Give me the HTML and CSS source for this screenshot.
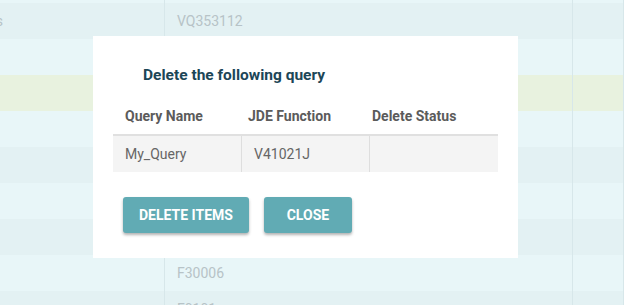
FILE: index.html
```html
<!DOCTYPE html>
<html lang="en">
<head>
    <meta charset="UTF-8">
    <meta name="viewport" content="width=device-width, initial-scale=1.0">
    <title>Delete Query</title>
    <link rel="stylesheet" href="styles.css">
</head>
<body>

<div class="grid">
    <div class="row light"><div class="cell first"></div><div class="cell"></div><div class="cell"></div></div>
    <div class="row dark"><div class="cell first"><span>Orders</span></div><div class="cell">VQ353112</div><div class="cell"></div></div>
    <div class="row light"><div class="cell first"></div><div class="cell"></div><div class="cell"></div></div>
    <div class="row selected"><div class="cell first"></div><div class="cell"></div><div class="cell"></div></div>
    <div class="row light"><div class="cell first"></div><div class="cell"></div><div class="cell"></div></div>
    <div class="row dark"><div class="cell first"></div><div class="cell"></div><div class="cell"></div></div>
    <div class="row light"><div class="cell first"></div><div class="cell"></div><div class="cell"></div></div>
    <div class="row dark"><div class="cell first"></div><div class="cell"></div><div class="cell"></div></div>
    <div class="row light"><div class="cell first"></div><div class="cell">F30006</div><div class="cell"></div></div>
    <div class="row dark"><div class="cell first"></div><div class="cell">F0101</div><div class="cell"></div></div>
</div>

<div class="modal">
    <h3 class="modal-title">Delete the following query</h3>
    <div class="query-table">
        <div class="query-head">
            <div>Query Name</div>
            <div>JDE Function</div>
            <div>Delete Status</div>
        </div>
        <div class="query-row">
            <div>My_Query</div>
            <div>V41021J</div>
            <div></div>
        </div>
    </div>
    <div class="actions">
        <button class="btn">Delete Items</button>
        <button class="btn">Close</button>
    </div>
</div>

</body>
</html>
```

FILE: styles.css
```css
body {
    font-family: Roboto, "Liberation Sans", Arial, sans-serif;
    margin: 0;
    width: 624px;
    height: 305px;
    overflow: hidden;
    position: relative;
    background-color: #e8f5f7;
}

/* background data grid */
.grid {
    margin-top: -33px;
}

.row {
    display: grid;
    grid-template-columns: 165px 408px 1fr;
    height: 36px;
}

.row.light {
    background-color: #e8f6f8;
}

.row.dark {
    background-color: #e3f1f3;
}

.row.selected {
    background-color: #e8f2df;
}

.cell {
    border-right: 1px solid #d7e7ea;
    padding-left: 12px;
    line-height: 36px;
    font-size: 14px;
    color: #b7c3c7;
    white-space: nowrap;
    overflow: hidden;
}

/* first column is scrolled off to the left */
.cell.first {
    display: flex;
    justify-content: flex-end;
    padding-left: 0;
    padding-right: 161px;
}

/* modal dialog */
.modal {
    position: absolute;
    left: 93px;
    top: 36px;
    width: 385px;
    padding: 20px 20px 25px;
    background-color: #fff;
}

.modal-title {
    margin: 0;
    padding: 9px 30px 13px;
    font-size: 15.5px;
    line-height: 20px;
    font-weight: 700;
    color: #1c4657;
}

.query-head {
    display: grid;
    grid-template-columns: 123px 124px 1fr;
    height: 36px;
    line-height: 36px;
    border-bottom: 2px solid #e0e0e0;
    font-size: 14px;
    font-weight: 700;
    color: #5b5b5b;
}

.query-head div {
    padding-left: 12px;
}

.query-row {
    display: grid;
    grid-template-columns: 129px 128px 1fr;
    height: 36px;
    line-height: 36px;
    background-color: #f4f4f4;
    font-size: 14px;
    color: #666;
}

.query-row div {
    padding-left: 12px;
    border-right: 1px solid #dedede;
}

.query-row div:last-child {
    border-right: none;
}

.actions {
    display: flex;
    gap: 15px;
    margin-top: 25px;
    padding-left: 10px;
}

.btn {
    min-width: 88px;
    height: 36px;
    padding: 0 16px;
    font-family: inherit;
    font-size: 14px;
    font-weight: 700;
    text-transform: uppercase;
    color: #fff;
    background-color: #61abb4;
    border: none;
    border-radius: 3px;
    box-shadow: 0 2px 3px rgba(0, 0, 0, 0.3);
    cursor: pointer;
}

.btn:hover {
    background-color: #549aa3;
}
```
